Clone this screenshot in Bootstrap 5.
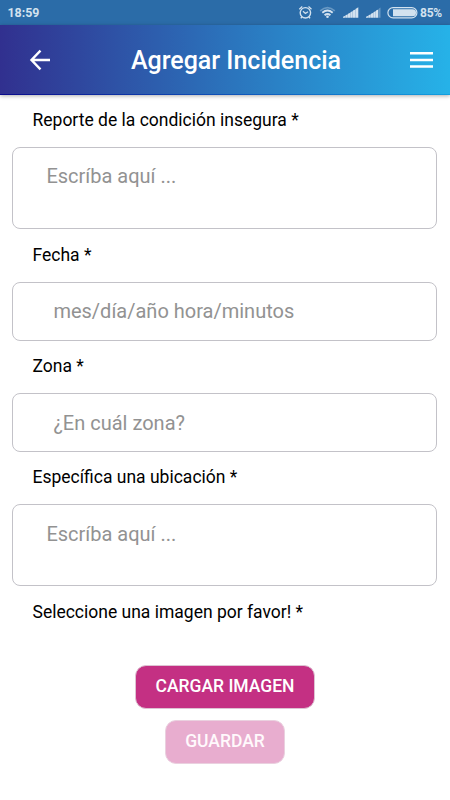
<!DOCTYPE html>
<html lang="es">
<head>
<meta charset="utf-8">
<meta name="viewport" content="width=device-width, initial-scale=1">
<title>Agregar Incidencia</title>
<link href="https://cdn.jsdelivr.net/npm/bootstrap@5.3.0/dist/css/bootstrap.min.css" rel="stylesheet">
<style>
body{font-family:Roboto,"Liberation Sans",sans-serif;background:#fff;color:#000;height:800px;overflow:hidden}
.status{height:25px;background:#2b6ca8;color:#d3e2ef;font-size:12px;font-weight:700;padding:0 8px 0 7.5px}
.status .battery{font-size:12px;padding-top:1px;letter-spacing:-.2px}
.status .clock{font-size:12.4px;padding-top:1px}
.topbar{height:70px;background:linear-gradient(90deg,#31308f 0%,#2b75bd 52%,#26b2e8 100%);border-bottom:1px solid;border-image:linear-gradient(90deg,#0a0a8c,#1060c0 60%,#12a0e0) 1;box-shadow:0 1px 4px rgba(0,0,0,.32);padding:0 16px 0 28px}
.topbar h1{font-size:25px;font-weight:500;line-height:30px;padding:2px 0 0 11px}
.topbar .btn{border:0;line-height:0}
.field-label{height:53px;padding:13.5px 0 0 32.5px;font-size:17.5px;line-height:24px;font-weight:400}
.field-label.first{height:52px;padding-top:13px}
.field-label.tight{height:52.5px;padding-top:13px}
.field{margin:0 12.4px;width:425px;height:58.5px;border:1px solid #c3c2c8;border-radius:8px;font-size:20px;line-height:28px;padding:14px 40px;resize:none}
.field.area{height:82px;padding:14px 33px}
.field.low{padding-top:15px;padding-bottom:13px}
.field::placeholder{color:#929292;opacity:1}
.field:focus{box-shadow:none}
.actions{gap:11px;padding-top:25.5px}
.action{height:44px;border:1px solid #ddc3d2;border-radius:11px;background:#c43083;color:#fff;font-size:17.5px;font-weight:500;padding:0;line-height:41px}
.load{width:180px}
.save{width:120px;background:#e8adcf;border-color:#ead0df;color:#fff9fc}
</style>
</head>
<body>
<div class="status d-flex align-items-center">
  <span class="clock me-auto">18:59</span>
  <svg width="125" height="25" viewBox="0 0 125 25" fill="none" stroke="#d3e2ef">
    <circle cx="10.4" cy="12.8" r="5.2" stroke-width="1.4"/>
    <path d="M8 11.3l2.4 2.2 2.6-1.8M4.3 9.2l3-2.6M16.5 9.2l-3-2.6M7 17l-1.3 1.3M13.8 17l1.3 1.3" stroke-width="1.3"/>
    <path d="M25.2 10.9q7.2-6.6 14.6 0" stroke="#6898c3" stroke-width="1.5"/>
    <path d="M27.3 12.8q5.2-4.4 10.4 0M29.6 15.2q2.9-2.4 5.8 0" stroke-width="1.9"/>
    <circle cx="32.5" cy="16.7" r="1.3" fill="#d3e2ef" stroke="none"/>
    <g fill="#d3e2ef" stroke="none">
      <path d="M48 17.8v-1l2.3-1v2zM50.5 17.8v-2.5l2.3-1v3.5zM53 17.8v-4l2.3-1.1v5.1zM55.5 17.8v-5.6l2.3-1.2v6.8zM58 17.8v-7.2l2.3-1.2v8.4zM60.5 17.8V9l2.8-1.7v10.5z"/>
      <path d="M71 17.8v-1l2.3-1v2zM73.5 17.8v-2.5l2.3-1v3.5zM76 17.8v-4l2.3-1.1v5.1zM78.500 17.8v-5.6l2.3-1.2v6.800zM81 17.8v-7.2l2.3-1.2v8.4z"/>
      <path d="M83.5 17.8V9l2-1.4v10.200z" fill="#6898c3"/>
    </g>
    <rect x="92.9" y="7.6" width="29" height="10.3" rx="5.15" stroke-width="1.2"/>
    <path d="M98 9.2h19.5a3.55 3.55 0 0 1 0 7.1H98z" fill="#d3e2ef" stroke="none"/>
  </svg>
  <span class="battery">85%</span>
</div>
<header class="topbar d-flex align-items-center justify-content-between text-white">
  <button class="btn p-0" type="button" aria-label="Volver"><svg width="24" height="24" viewBox="0 0 24 24" fill="none" stroke="#fff" stroke-width="2.4"><path d="M22 12H3.500M12.5 2.700L3.500 12l9 9.300"/></svg></button>
  <h1 class="m-0">Agregar Incidencia</h1>
  <button class="btn p-0" type="button" aria-label="Menú"><svg width="25" height="24" viewBox="0 0 25 24" fill="#fff"><path d="M1 4h23v2.5H1zM1 10.700h23v2.5H1zM1 17.300h23v2.5H1z"/></svg></button>
</header>
<main>
  <form>
    <label class="field-label first d-block" for="report">Reporte de la condición insegura *</label>
    <textarea class="field area form-control" id="report" placeholder="Escríba aquí ..."></textarea>
    <label class="field-label d-block" for="date">Fecha *</label>
    <input class="field form-control" id="date" type="text" placeholder="mes/día/año hora/minutos">
    <label class="field-label tight d-block" for="zone">Zona *</label>
    <input class="field low form-control" id="zone" type="text" placeholder="¿En cuál zona?">
    <label class="field-label tight d-block" for="place">Específica una ubicación *</label>
    <textarea class="field area low form-control" id="place" placeholder="Escríba aquí ..."></textarea>
    <div class="field-label">Seleccione una imagen por favor! *</div>
    <div class="actions d-flex flex-column align-items-center">
      <button class="action load btn" type="button">CARGAR IMAGEN</button>
      <button class="action save btn" type="button">GUARDAR</button>
    </div>
  </form>
</main>
<script src="https://cdn.jsdelivr.net/npm/bootstrap@5.3.0/dist/js/bootstrap.bundle.min.js"></script>
</body>
</html>
